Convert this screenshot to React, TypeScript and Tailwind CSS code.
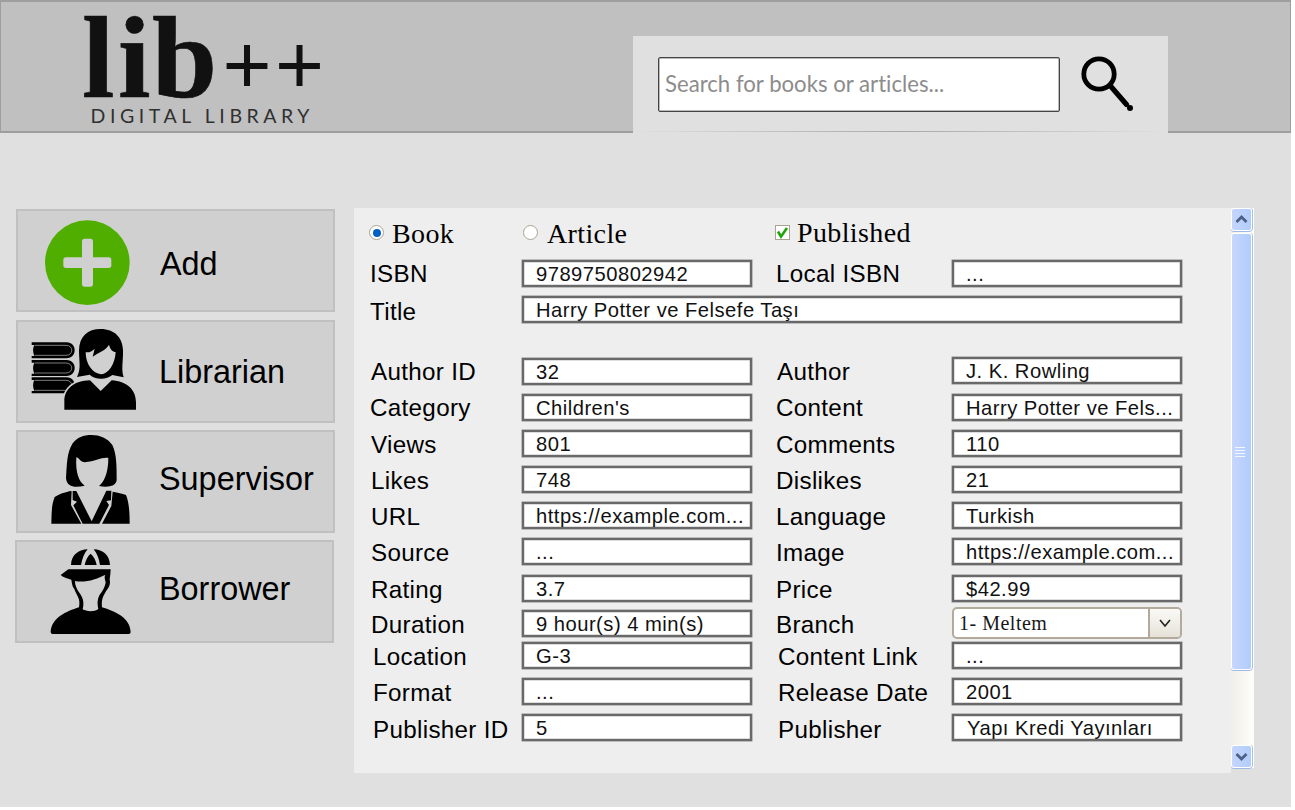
import React from "react";

const sans = "font-['Liberation_Sans',Arial,sans-serif]";
const serif = "font-['Liberation_Serif','Times_New_Roman',serif]";

function Logo() {
  return (
    <svg width="260" height="129" viewBox="76 2 260 129" className="block overflow-visible" fill="#111">
      <g fontFamily="'Liberation Serif', serif" fontWeight="700" fontSize="117" stroke="#111" strokeWidth="0.6">
        <text x="82 118 152" y="96.5">lib</text>
      </g>
      <text x="222.5 275" y="93" fontFamily="'Liberation Sans', sans-serif" fontSize="84">++</text>
      <text x="90.5" y="123" fontFamily="Lato, sans-serif" fontSize="19.5" fill="#303030" textLength="219" lengthAdjust="spacing">
        DIGITAL LIBRARY
      </text>
    </svg>
  );
}

function AddIcon() {
  return (
    <svg width="112" height="99" viewBox="54 31 336 297" className="block shrink-0">
      <circle cx="262" cy="186" r="127" fill="#50ae00" />
      <rect x="190" y="170" width="144" height="32" rx="8" fill="#d0d0d0" />
      <rect x="246" y="114" width="33" height="144" rx="8" fill="#d0d0d0" />
    </svg>
  );
}

function Book({ y }: { y: number }) {
  return (
    <g transform={`translate(0 ${y})`}>
      <path d="M95 0H200C232 0 232 48 200 48H95V41H103C98 28 98 18 103 8H95Z" fill="#000" />
      <path d="M104 9H198C221 9 221 39 198 39H104" fill="none" stroke="#a8a8a8" strokeWidth="2.2" />
    </g>
  );
}

function LibrarianIcon() {
  return (
    <svg width="119" height="99" viewBox="54 366 357 297" className="block shrink-0">
      <Book y={427} />
      <Book y={480} />
      <Book y={532} />
      <path
        d="M193 629V604C193 567 222 542 270 541L302 573L335 541C380 544 408 569 408 607V629Z"
        fill="#000"
        stroke="#d0d0d0"
        strokeWidth="11"
        paintOrder="stroke"
      />
      <path
        d="M231 531C244 506 237 485 237 451C238 409 263 387 302 387C344 387 368 413 369 451C370 483 363 508 371 532L337 525C320 540 285 540 269 524Z"
        fill="#000"
        stroke="#d0d0d0"
        strokeWidth="6"
        paintOrder="stroke"
      />
      <path d="M257 457C270 458 279 452 284 446L278 470C297 457 317 451 327 434C331 450 338 455 347 456C345 492 326 521 303 523C279 521 257 494 257 457Z" fill="#d0d0d0" />
    </svg>
  );
}

function SupervisorIcon() {
  return (
    <svg width="119" height="99" viewBox="54 20 357 297" className="block shrink-0">
      <path d="M198 158C201 117 200 83 218 54C232 36 250 29 274 29C300 29 323 39 337 59C350 86 350 122 350 164C348 184 322 187 297 182C310 172 325 147 325 98C304 95 286 109 255 111C241 111 236 96 229 96C226 143 237 169 254 181C226 188 200 186 198 158Z" fill="#000" />
      <path d="M154 295C155 265 154 239 164 215C178 205 194 202 210 197L215 198L213 239L244 295ZM218 197H229L275 288L319 196H334L333 225L319 227L327 239L298 295H248L220 240L231 229L218 224ZM338 199C354 203 366 204 378 209C388 232 389 267 389 295H306L334 242Z" fill="#000" />
    </svg>
  );
}

function BorrowerIcon() {
  return (
    <svg width="119" height="99" viewBox="51 351 357 297" className="block shrink-0">
      <path d="M213 420C214 388 238 374 263 373C252 385 247 401 243 420ZM254 420C257 405 263 393 272 386C281 394 287 404 290 420ZM281 373C309 374 329 391 330 420H300C297 400 291 386 281 373Z" fill="#000" />
      <path d="M182 450L205 433H332L331 448L329 463C333 481 324 491 318 499C309 515 304 522 306 547C344 559 390 577 392 621Q392 627 386 627H158Q152 627 152 621C154 579 199 559 237 547C243 520 229 511 223 492C216 484 216 475 214 464C202 461 188 457 182 450Z" fill="#000" />
      <path d="M225 468C256 474 292 462 316 449C311 458 317 466 317 473C314 488 307 498 300 508C291 523 292 536 295 552C283 561 259 560 248 553C254 529 247 515 238 503C229 491 225 480 225 468Z" fill="#d0d0d0" />
    </svg>
  );
}

const menu = [
  { label: "Add", icon: <AddIcon />, box: "mt-0", text: "pt-[35px] ml-[30px]" },
  { label: "Librarian", icon: <LibrarianIcon />, box: "mt-[8px]", text: "pt-[32px] ml-[22px]" },
  { label: "Supervisor", icon: <SupervisorIcon />, box: "mt-[7px]", text: "pt-[29px] ml-[22px]" },
  { label: "Borrower", icon: <BorrowerIcon />, box: "mt-[7px] -ml-px", text: "pt-[29px] ml-[23px]" },
];

type Cell = { label: string; value: string; lab: string; val?: string; box?: string; select?: boolean };
type Line = { row: string; cells: Cell[] };

const lines: Line[] = [
  { row: "mt-0", cells: [{ label: "ISBN", value: "9789750802942", lab: "pl-[16px]" }, { label: "Local ISBN", value: "...", lab: "pl-[24px]" }] },
  { row: "mt-[9px]", cells: [{ label: "Title", value: "Harry Potter ve Felsefe Taşı", lab: "pl-[16px] pt-[2px]", box: "w-[660px]" }] },
  { row: "mt-[35px]", cells: [{ label: "Author ID", value: "32", lab: "pl-[17px]" }, { label: "Author", value: "J. K. Rowling", lab: "pl-[25px]", box: "w-[230px] -mt-px" }] },
  { row: "mt-[9px]", cells: [{ label: "Category", value: "Children's", lab: "pl-[16px]" }, { label: "Content", value: "Harry Potter ve Fels...", lab: "pl-[24px]" }] },
  { row: "mt-[9px]", cells: [{ label: "Views", value: "801", lab: "pl-[17px] pt-px" }, { label: "Comments", value: "110", lab: "pl-[24px] pt-px" }] },
  { row: "mt-[9px]", cells: [{ label: "Likes", value: "748", lab: "pl-[17px] pt-px" }, { label: "Dislikes", value: "21", lab: "pl-[24px] pt-px" }] },
  { row: "mt-[9px]", cells: [{ label: "URL", value: "https://example.com...", lab: "pl-[17px] pt-px" }, { label: "Language", value: "Turkish", lab: "pl-[24px] pt-px" }] },
  { row: "mt-[9px]", cells: [{ label: "Source", value: "...", lab: "pl-[17px] pt-px" }, { label: "Image", value: "https://example.com...", lab: "pl-[24px] pt-px" }] },
  { row: "mt-[10px]", cells: [{ label: "Rating", value: "3.7", lab: "pl-[17px] pt-px" }, { label: "Price", value: "$42.99", lab: "pl-[24px] pt-px" }] },
  { row: "mt-[8px]", cells: [{ label: "Duration", value: "9 hour(s) 4 min(s)", lab: "pl-[17px] pt-px" }, { label: "Branch", value: "1- Meltem", lab: "pl-[24px] pt-px", select: true }] },
  { row: "mt-[5px]", cells: [{ label: "Location", value: "G-3", lab: "pl-[19px] pt-px" }, { label: "Content Link", value: "...", lab: "pl-[26px] pt-px" }] },
  { row: "mt-[9px]", cells: [{ label: "Format", value: "...", lab: "pl-[19px] pt-px" }, { label: "Release Date", value: "2001", lab: "pl-[26px] pt-px" }] },
  { row: "mt-[9px]", cells: [{ label: "Publisher ID", value: "5", lab: "pl-[19px] pt-[2px]" }, { label: "Publisher", value: "Yapı Kredi Yayınları", lab: "pl-[26px] pt-[2px]", val: "pl-[13px]" }] },
];

function Select({ value }: { value: string }) {
  return (
    <div className="-mt-[3px] flex h-[32px] w-[230px] shrink-0 overflow-hidden rounded-[5px] border-2 border-[#b3aa9c] bg-white">
      <div className={`${serif} flex-1 pl-[5px] text-[20px] leading-[29px] tracking-[0.5px] text-[#181818]`}>{value}</div>
      <div className="flex w-[32px] items-center justify-center border-l-2 border-[#b3aa9c] bg-linear-to-b from-[#faf9f6] via-[#f0eee7] to-[#e6e2d8]">
        <svg width="14" height="10" viewBox="0 0 14 10">
          <path d="M2 2L7 8L12 2" fill="none" stroke="#222" strokeWidth="1.6" />
        </svg>
      </div>
    </div>
  );
}

function FormLine({ line }: { line: Line }) {
  return (
    <div className={`${line.row} flex h-[27px]`}>
      {line.cells.map((c, i) => (
        <React.Fragment key={c.label}>
          <div className={`${i === 0 ? "w-[168px]" : "w-[200px]"} ${c.lab} shrink-0 text-[24.2px] leading-[27px] tracking-[0.32px] whitespace-nowrap`}>
            {c.label}
          </div>
          {c.select ? (
            <Select value={c.value} />
          ) : (
            <div
              className={`${c.box ?? "w-[230px]"} ${c.val ?? "pl-[12px]"} h-[27px] shrink-0 overflow-hidden border-2 border-[#696969] bg-white text-[20.2px] leading-[25px] tracking-[0.48px] whitespace-nowrap text-[#111] shadow-[0_0_0_0.5px_#8c8c8c,inset_0_0_0_0.5px_#bbb]`}
            >
              {c.value}
            </div>
          )}
        </React.Fragment>
      ))}
    </div>
  );
}

function ScrollButton({ up }: { up: boolean }) {
  return (
    <div className="flex h-[23px] w-[21px] shrink-0 items-center justify-center rounded-[3px] border border-white bg-linear-to-r from-[#c5d5fd] to-[#b0cdfb] shadow-[0_1px_0_#9db9e6,1px_0_0_#a9c1ea]">
      <svg width="13" height="9" viewBox="0 0 13 9" fill="none" stroke="#4d6185" strokeWidth="2.8">
        {up ? <path d="M1.5 7L6.5 2L11.5 7" /> : <path d="M1.5 2L6.5 7L11.5 2" />}
      </svg>
    </div>
  );
}

export default function App() {
  return (
    <div className={`${sans} h-[810px] w-full overflow-hidden bg-white text-black`}>
      <div className="h-[807px] w-[1291px] bg-[#e0e0e0]">
        <header className="flex h-[133px] border-x border-y-2 border-[#9e9e9e] bg-[#c0c0c0] pl-[75px]">
          <Logo />
          <div className="mt-[34px] ml-[297px] flex h-[97px] w-[535px] flex-col bg-[#e0e0e0] pt-[21px]">
            <div className="flex h-[74px] pl-[25px]">
              <div className="h-[55px] w-[402px] shrink-0 rounded-[2px] border-[1.5px] border-[#444] bg-white pl-[6px] font-[Lato,sans-serif] text-[23.5px] leading-[50px] whitespace-nowrap text-[#8c8c8c] shadow-[inset_0_0_0_0.5px_#777]">
                <span className="inline-block origin-left scale-x-[0.943] [font-variant-ligatures:none]">Search for books or articles...</span>
              </div>
              <svg width="60" height="60" viewBox="1080 54 60 60" className="-mt-[3px] ml-[20px] shrink-0">
                <circle cx="1099" cy="74" r="15.2" fill="none" stroke="#000" strokeWidth="4.8" />
                <path d="M1110.5 86L1126.5 104.5" stroke="#000" strokeWidth="5.2" strokeLinecap="round" />
                <circle cx="1130" cy="108" r="3" fill="#000" />
              </svg>
            </div>
            <div className="h-px w-full shrink-0 bg-linear-to-r from-[#e0e0e0] via-[#a8a8a8] to-[#e0e0e0]" />
          </div>
        </header>

        <main className="flex pt-[75px]">
          <nav className="mt-px ml-[16px] w-[319px] shrink-0">
            {menu.map((m) => (
              <div key={m.label} className={`${m.box} flex h-[103px] w-[319px] border-2 border-[#c0c0c0] bg-[#d0d0d0]`}>
                {m.icon}
                <span className={`${m.text} text-[32.4px] leading-[37px] whitespace-nowrap`}>{m.label}</span>
              </div>
            ))}
          </nav>

          <section className="ml-[19px] h-[565px] w-[877px] shrink-0 bg-[#eeeeee]">
            <div className={`${serif} flex h-[52px] pt-[9px] text-[28px] leading-[34px] tracking-[0.38px]`}>
              <div className="flex w-[168px] pl-[15px]">
                <span className="mt-[8px] flex size-[15px] items-center justify-center rounded-full border-[1.5px] border-[#aaa393] bg-white">
                  <span className="size-[8px] rounded-full bg-[#0060c8]" />
                </span>
                <span className="ml-[8px]">Book</span>
              </div>
              <div className="flex w-[252px] pl-px">
                <span className="mt-[8px] size-[15px] rounded-full border-[1.5px] border-[#aaa393] bg-white" />
                <span className="ml-[9px]">Article</span>
              </div>
              <div className="flex">
                <span className="mt-[8px] ml-px flex size-[15px] items-center justify-center border-[1.5px] border-[#aaa393] bg-white">
                  <svg width="13" height="13" viewBox="0 0 13 13">
                    <path d="M2 5.5L5 10.5L11 2" fill="none" stroke="#1ea60b" strokeWidth="2.6" />
                  </svg>
                </span>
                <span className="-mt-px ml-[7px]">Published</span>
              </div>
            </div>
            {lines.map((l) => (
              <FormLine key={l.cells[0].label} line={l} />
            ))}
          </section>

          <div className="flex h-[560px] w-[23px] shrink-0 flex-col bg-linear-to-r from-[#f1efe8] to-[#fefefb]">
            <ScrollButton up />
            <div className="mt-[2px] mb-auto flex h-[437px] w-[21px] items-center justify-center rounded-[3px] border border-white bg-linear-to-r from-[#c7d6fd] to-[#b0cdfb] shadow-[0_1px_0_#9db9e6,1px_0_0_#a9c1ea]">
              <div className="-ml-[3px] flex flex-col gap-[2px]">
                <span className="h-px w-[10px] bg-[#f4f8fe]" />
                <span className="h-px w-[10px] bg-[#f4f8fe]" />
                <span className="h-px w-[10px] bg-[#f4f8fe]" />
                <span className="h-px w-[10px] bg-[#f4f8fe]" />
              </div>
            </div>
            <ScrollButton up={false} />
          </div>
        </main>
      </div>
    </div>
  );
}
